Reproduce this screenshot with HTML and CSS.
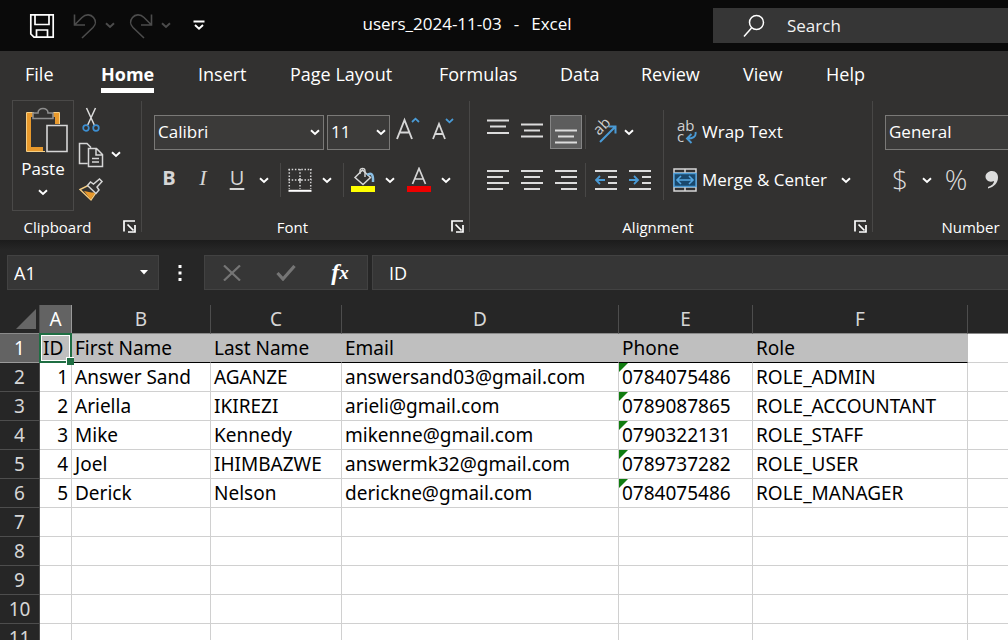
FILE: index.html
```html
<!DOCTYPE html>
<html lang="en">
<head>
<meta charset="utf-8">
<title>users_2024-11-03 - Excel</title>
<link rel="stylesheet" href="styles.css">
</head>
<body>
<svg class="defs" aria-hidden="true">
  <symbol id="chev" viewBox="0 0 10 7"><path d="M1 1.2l4 3.8 4-3.8" fill="none" stroke="currentColor" stroke-width="1.9"/></symbol>
  <symbol id="launch" viewBox="0 0 13 13"><path d="M1 11.5V1h11M4.500 4.500l6 6M12 5v7H5" fill="none" stroke="#fff" stroke-width="1.7"/></symbol>
</svg>

<header class="titlebar">
  <div class="quick">
    <button class="quick-btn" aria-label="Save"><svg width="26" height="26" viewBox="0 0 26 26" fill="none" stroke="#fff" stroke-width="1.700"><path d="M1.800 1.800h22.400v22.400H5l-3.200-3.200zM6 2v9.500h14V2M7.500 24v-7h11v7"/></svg></button>
    <button class="quick-btn dim" aria-label="Undo"><svg width="26" height="26" viewBox="0 0 26 26" fill="none" stroke="currentColor" stroke-width="1.600"><path d="M2.500 1.500v10.500h10.500M2.500 12L10 4.500c4-4 9-3 11.500 0s2.500 7-.5 10L10 25"/></svg></button>
    <button class="chev-btn dim" aria-label="Undo list"><svg width="10" height="7"><use href="#chev"/></svg></button>
    <button class="quick-btn dim" aria-label="Redo"><svg width="26" height="26" viewBox="0 0 26 26" fill="none" stroke="currentColor" stroke-width="1.600"><path d="M23.500 1.500v10.500H13M23.500 12L16 4.500c-4-4-9-3-11.500 0s-2.500 7 .5 10L16 25"/></svg></button>
    <button class="chev-btn dim" aria-label="Redo list"><svg width="10" height="7"><use href="#chev"/></svg></button>
    <button class="quick-btn" aria-label="Customize toolbar"><svg width="12" height="11" viewBox="0 0 12 11" fill="none" stroke="#fff"><path d="M.5 1.500h11" stroke-width="2"/><path d="M2 5l4 3.800L10 5" stroke-width="1.900"/></svg></button>
  </div>
  <h1 class="doc-title"><span>users_2024-11-03</span><span>-</span><span>Excel</span></h1>
  <label class="search">
    <svg width="22" height="24" viewBox="0 0 22 24" fill="none" stroke="#fff" stroke-width="1.500"><circle cx="13.500" cy="8.500" r="7"/><path d="M8.500 14L1 22.500"/></svg>
    <input type="search" placeholder="Search" aria-label="Search">
  </label>
</header>

<section class="ribbon">
  <nav class="tabs">
    <a href="#file">File</a><a href="#home" class="current">Home</a><a href="#insert">Insert</a><a href="#layout">Page Layout</a><a href="#formulas">Formulas</a><a href="#data">Data</a><a href="#review">Review</a><a href="#view">View</a><a href="#help">Help</a>
  </nav>
  <div class="groups">
    <section class="group clipboard">
      <div class="clip-main">
        <button class="paste">
          <svg width="44" height="46" viewBox="0 0 44 46" fill="none">
            <path d="M12 8H4v34h14M26 8h6v9" stroke="#e8992c" stroke-width="4"/>
            <path d="M9 5.500H1.500v39H20M28 5.500h6.500V17" stroke="#f6cf85" stroke-width="1"/>
            <path d="M8 11.500V6h5c0-6 10-6 10 0h5v5.500z" fill="#323130" stroke="#8e8e8e" stroke-width="1.600"/>
            <path d="M22 18.500h20v26H22z" fill="#323130" stroke="#d6d6d6" stroke-width="1.600"/>
          </svg>
          <span>Paste</span>
          <svg width="10" height="7"><use href="#chev"/></svg>
        </button>
        <div class="clip-tools">
          <button class="tool" aria-label="Cut"><svg width="18" height="26" viewBox="0 0 18 26" fill="none"><path d="M4.500 1l7.800 17M13.500 1L5.700 18" stroke="#dcdcdc" stroke-width="1.500"/><circle cx="4" cy="21" r="2.800" stroke="#3d8fd1" stroke-width="1.700"/><circle cx="14" cy="21" r="2.800" stroke="#3d8fd1" stroke-width="1.700"/></svg></button>
          <span class="tool-split">
            <button class="tool" aria-label="Copy"><svg width="26" height="26" viewBox="0 0 26 26" fill="none" stroke="#d6d6d6" stroke-width="1.500"><path d="M9.500 21.500H1.500V1.500h7.500l4 4M10.500 6.500h8l6 6v12h-14zM18 7v6h6M14 16.500h7M14 20h7"/></svg></button>
            <button class="chev-btn" aria-label="Copy options"><svg width="10" height="7"><use href="#chev"/></svg></button>
          </span>
          <button class="tool" aria-label="Format Painter"><svg width="26" height="24" viewBox="0 0 26 24" fill="none"><path d="M2 11.500L13 22l5.500-8-8.500-6.500z" fill="#323130" stroke="#f6cf85" stroke-width="1.400"/><path d="M6 13l7.500 1.500 4 0L12.500 21.500z" fill="#e8992c"/><path d="M9.500 7.500l3-3.500 3 2 6-5 2.500 2.500-5 5.500 2 3-3 3.500z" fill="#323130" stroke="#d6d6d6" stroke-width="1.500"/></svg></button>
        </div>
      </div>
      <footer class="group-label"><span>Clipboard</span><button class="launch" aria-label="Clipboard settings"><svg width="13" height="13"><use href="#launch"/></svg></button></footer>
    </section>

    <section class="group font">
      <div class="group-main">
        <div class="row row-fields">
          <span class="field field-name"><select aria-label="Font"><option>Calibri</option></select><svg width="10" height="7"><use href="#chev"/></svg></span>
          <span class="field field-size"><select aria-label="Font size"><option>11</option></select><svg width="10" height="7"><use href="#chev"/></svg></span>
          <button class="icon-btn raised" aria-label="Increase font size"><svg width="26" height="30" viewBox="0 0 26 30" fill="none"><path d="M2 25L9.500 6l7.500 19M4.700 18.500h9.800" stroke="#d6d6d6" stroke-width="1.900"/><path d="M17 8l3.500-3.300L24 8" stroke="#4a9bd6" stroke-width="1.800"/></svg></button>
          <button class="icon-btn raised" aria-label="Decrease font size"><svg width="26" height="30" viewBox="0 0 26 30" fill="none"><path d="M4 25l6-15 6 15M6 20h8" stroke="#d6d6d6" stroke-width="1.800"/><path d="M17 5l3.500 3.300L24 5" stroke="#4a9bd6" stroke-width="1.800"/></svg></button>
        </div>
        <div class="row row-buttons">
          <button class="icon-btn glyph bold">B</button>
          <button class="icon-btn glyph italic">I</button>
          <button class="icon-btn glyph underline">U</button>
          <button class="chev-btn" aria-label="Underline options"><svg width="10" height="7"><use href="#chev"/></svg></button>
          <i class="sep"></i>
          <button class="icon-btn" aria-label="Borders"><svg width="24" height="24" viewBox="0 0 24 24" fill="none" stroke="#d6d6d6" stroke-width="1.500"><path d="M.5 1.500h23M.5 12h23" stroke-dasharray="1.500 1.700"/><path d="M1.300 1v20M12 1v20M22.700 1v20" stroke-dasharray="1.500 1.700"/><path d="M10 12h4M12 10v4" stroke-width="1.200"/><path d="M.5 22.800h23" stroke="#fff" stroke-width="2"/></svg></button>
          <button class="chev-btn" aria-label="Border options"><svg width="10" height="7"><use href="#chev"/></svg></button>
          <i class="sep"></i>
          <button class="icon-btn" aria-label="Fill color"><svg width="24" height="26" viewBox="0 0 24 26" fill="none"><path d="M4 10.500L11.500 3l8 7.500-7.500 7z" stroke="#d6d6d6" stroke-width="1.500"/><path d="M9 7V4c0-3.500 5-3.500 5 0v6" stroke="#d6d6d6" stroke-width="1.400"/><path d="M16 8c4-3 6.500-1 6 7" stroke="#8bbfe4" stroke-width="2.500"/><path d="M0 19h24v6H0z" fill="#ffff00"/></svg></button>
          <button class="chev-btn" aria-label="Fill color options"><svg width="10" height="7"><use href="#chev"/></svg></button>
          <i class="space"></i>
          <button class="icon-btn" aria-label="Font color"><svg width="24" height="26" viewBox="0 0 24 26" fill="none"><path d="M5.500 17L12 1.500 18.500 17M8 12h8" stroke="#d6d6d6" stroke-width="1.700"/><path d="M0 19h24v6H0z" fill="#ee0000"/></svg></button>
          <button class="chev-btn" aria-label="Font color options"><svg width="10" height="7"><use href="#chev"/></svg></button>
        </div>
      </div>
      <footer class="group-label"><span>Font</span><button class="launch" aria-label="Font settings"><svg width="13" height="13"><use href="#launch"/></svg></button></footer>
    </section>

    <section class="group alignment">
      <div class="align-main">
        <div class="group-main">
          <div class="row">
            <button class="icon-btn" aria-label="Top align"><svg width="22" height="30" viewBox="0 0 22 30" stroke="#dcdcdc" stroke-width="1.800"><path d="M0 3.500h22M3 9.500h16M0 16h22"/></svg></button>
            <button class="icon-btn" aria-label="Middle align"><svg width="22" height="30" viewBox="0 0 22 30" stroke="#dcdcdc" stroke-width="1.800"><path d="M0 7.500h22M3 13.500h16M0 19.500h22"/></svg></button>
            <button class="icon-btn active" aria-label="Bottom align"><svg width="22" height="30" viewBox="0 0 22 30" stroke="#dcdcdc" stroke-width="1.800"><path d="M0 13.500h22M3 19.500h16M0 25.500h22"/></svg></button>
            <i class="sep"></i>
            <button class="icon-btn narrow" aria-label="Orientation"><svg width="28" height="34" viewBox="0 0 28 34" fill="none"><text x="0" y="0" transform="translate(9 21) rotate(-45)" class="ab">ab</text><path d="M10 27L25 12M18.500 11.500H25.500V18.500" stroke="#4a9bd6" stroke-width="2"/></svg></button>
            <button class="chev-btn" aria-label="Orientation options"><svg width="10" height="7"><use href="#chev"/></svg></button>
          </div>
          <div class="row">
            <button class="icon-btn" aria-label="Align left"><svg width="22" height="22" viewBox="0 0 22 22" stroke="#dcdcdc" stroke-width="1.800"><path d="M0 2h22M0 8h16M0 14h22M0 20h16"/></svg></button>
            <button class="icon-btn" aria-label="Center"><svg width="22" height="22" viewBox="0 0 22 22" stroke="#dcdcdc" stroke-width="1.800"><path d="M0 2h22M3 8h16M0 14h22M3 20h16"/></svg></button>
            <button class="icon-btn" aria-label="Align right"><svg width="22" height="22" viewBox="0 0 22 22" stroke="#dcdcdc" stroke-width="1.800"><path d="M0 2h22M6 8h16M0 14h22M6 20h16"/></svg></button>
            <i class="sep"></i>
            <button class="icon-btn" aria-label="Decrease indent"><svg width="22" height="22" viewBox="0 0 22 22" fill="none" stroke="#dcdcdc" stroke-width="1.800"><path d="M0 2h22M13 8h9M13 14h9M0 20h22"/><path d="M10 11H1.500M5 7l-4 4 4 4" stroke="#4a9bd6"/></svg></button>
            <button class="icon-btn" aria-label="Increase indent"><svg width="22" height="22" viewBox="0 0 22 22" fill="none" stroke="#dcdcdc" stroke-width="1.800"><path d="M0 2h22M13 8h9M13 14h9M0 20h22"/><path d="M0 11h8.500M5 7l4 4-4 4" stroke="#4a9bd6"/></svg></button>
          </div>
        </div>
        <div class="group-main wrap-block">
          <div class="row"><button class="text-btn"><svg width="24" height="34" viewBox="0 0 24 34" fill="none"><text x="4" y="16" class="ab">ab</text><text x="4" y="27" class="ab">c</text><path d="M22.500 17c1 5-3 6.500-8 6.500M18.500 19l-4.500 4.500 4.500 4.500" stroke="#4a9bd6" stroke-width="1.900"/></svg><span>Wrap Text</span></button></div>
          <div class="row"><button class="text-btn"><svg width="24" height="24" viewBox="0 0 24 24" fill="none"><path d="M1 1h22v22H1zM12 1v22M1 5h22M1 19h22" stroke="#d6d6d6" stroke-width="1.500"/><path d="M1 5.500h22v13H1z" fill="#19486c" stroke="#4a9bd6" stroke-width="1.500"/><path d="M4 12h16M8 8l-4 4 4 4M16 8l4 4-4 4" stroke="#55a7e0" stroke-width="1.600"/></svg><span>Merge &amp; Center</span></button><button class="chev-btn merge-chev" aria-label="Merge options"><svg width="10" height="7"><use href="#chev"/></svg></button></div>
        </div>
      </div>
      <footer class="group-label"><span>Alignment</span><button class="launch" aria-label="Alignment settings"><svg width="13" height="13"><use href="#launch"/></svg></button></footer>
    </section>

    <section class="group number">
      <div class="group-main">
        <div class="row row-fields"><span class="field field-format"><select aria-label="Number format"><option>General</option></select><svg width="10" height="7"><use href="#chev"/></svg></span></div>
        <div class="row row-buttons">
          <button class="icon-btn symbol">$</button>
          <button class="chev-btn" aria-label="Currency options"><svg width="10" height="7"><use href="#chev"/></svg></button>
          <i class="space"></i>
          <button class="icon-btn symbol">%</button>
          <i class="space"></i>
          <button class="icon-btn" aria-label="Comma style"><svg width="14" height="22" viewBox="0 0 14 22"><path d="M7 2c4 0 6 3 6 6.500 0 5.500-4 9.500-10 11v-1.500c4-1.500 6-3.500 6-6-5 2-8.500-1-8.500-4.500C.5 4.500 3.500 2 7 2z" fill="#dcdcdc"/></svg></button>
        </div>
      </div>
      <footer class="group-label"><span>Number</span></footer>
    </section>
  </div>
</section>

<section class="formula-bar">
  <div class="name-box"><input type="text" value="A1" aria-label="Name box"><button aria-label="Named ranges"><svg width="8" height="5" viewBox="0 0 8 5"><path d="M0 0h8L4 4.500z" fill="#fff"/></svg></button></div>
  <svg class="dots" width="4" height="16" viewBox="0 0 4 16" fill="#fff"><path d="M.5 0h3v3h-3zM.5 6.500h3v3h-3zM.5 13h3v3h-3z"/></svg>
  <div class="entry">
    <button aria-label="Cancel"><svg width="18" height="16" viewBox="0 0 18 16"><path d="M1 .5l16 15M17 .5l-16 15" stroke="#757575" stroke-width="2.200"/></svg></button>
    <button aria-label="Enter"><svg width="20" height="16" viewBox="0 0 20 16" fill="none"><path d="M1.500 8l5.500 6L18.500 1" stroke="#757575" stroke-width="3.200"/></svg></button>
    <button class="fx" aria-label="Insert function">f<small>x</small></button>
  </div>
  <input class="formula" type="text" value="ID" aria-label="Formula">
</section>

<main class="sheet">
  <table>
    <colgroup><col class="c-num"><col class="c-a"><col class="c-b"><col class="c-c"><col class="c-d"><col class="c-e"><col class="c-f"><col></colgroup>
    <thead><tr><th class="corner"><svg width="20" height="20" viewBox="0 0 20 20"><path d="M20 0v20H0z" fill="#666"/></svg></th><th class="selected">A</th><th>B</th><th>C</th><th>D</th><th>E</th><th>F</th><th></th></tr></thead>
    <tbody>
      <tr class="titles"><th class="selected">1</th><td class="cursor">ID</td><td>First Name</td><td>Last Name</td><td>Email</td><td>Phone</td><td>Role</td><td></td></tr>
      <tr><th>2</th><td class="num">1</td><td>Answer Sand</td><td>AGANZE</td><td>answersand03@gmail.com</td><td class="flag">0784075486</td><td>ROLE_ADMIN</td><td></td></tr>
      <tr><th>3</th><td class="num">2</td><td>Ariella</td><td>IKIREZI</td><td>arieli@gmail.com</td><td class="flag">0789087865</td><td>ROLE_ACCOUNTANT</td><td></td></tr>
      <tr><th>4</th><td class="num">3</td><td>Mike</td><td>Kennedy</td><td>mikenne@gmail.com</td><td class="flag">0790322131</td><td>ROLE_STAFF</td><td></td></tr>
      <tr><th>5</th><td class="num">4</td><td>Joel</td><td>IHIMBAZWE</td><td>answermk32@gmail.com</td><td class="flag">0789737282</td><td>ROLE_USER</td><td></td></tr>
      <tr><th>6</th><td class="num">5</td><td>Derick</td><td>Nelson</td><td>derickne@gmail.com</td><td class="flag">0784075486</td><td>ROLE_MANAGER</td><td></td></tr>
      <tr><th>7</th><td></td><td></td><td></td><td></td><td></td><td></td><td></td></tr>
      <tr><th>8</th><td></td><td></td><td></td><td></td><td></td><td></td><td></td></tr>
      <tr><th>9</th><td></td><td></td><td></td><td></td><td></td><td></td><td></td></tr>
      <tr><th>10</th><td></td><td></td><td></td><td></td><td></td><td></td><td></td></tr>
      <tr><th>11</th><td></td><td></td><td></td><td></td><td></td><td></td><td></td></tr>
    </tbody>
  </table>
</main>
</body>
</html>
```
FILE: styles.css
```css
* { box-sizing: border-box; }

body {
  margin: 0;
  height: 100vh;
  display: flex;
  flex-direction: column;
  overflow: hidden;
  background: #262626;
  color: #fff;
  font: 16px/24px "Open Sans", "Noto Sans", sans-serif;
}

button, input, select {
  margin: 0;
  padding: 0;
  border: 0;
  background: none;
  color: inherit;
  font: inherit;
}

button {
  display: flex;
  flex: none;
  align-items: center;
  justify-content: center;
}

input { min-width: 0; outline: 0; }
svg { display: block; flex: none; }
.defs { position: absolute; width: 0; height: 0; }

/* Title bar */
.titlebar {
  flex: none;
  height: 51px;
  display: grid;
  grid-template-columns: 221px 492px 1fr;
  align-items: center;
  background: #0a0a0a;
}
.quick { display: flex; align-items: center; padding-left: 24px; }
.quick-btn { width: 36px; height: 36px; }
.dim { color: #4c4c4c; }
.quick .chev-btn { width: 14px; margin: 0 3px 0 4px; }
.quick-btn.dim { width: 36px; margin-left: 7px; margin-right: -4px; }
.quick .chev-btn + .quick-btn.dim { margin-left: 3px; }
.quick .chev-btn + .quick-btn:last-child { margin-left: 5px; }
.doc-title {
  display: flex;
  justify-content: center;
  gap: 12px;
  margin: 0;
  padding-bottom: 4px;
  font-size: 17px;
  font-weight: 400;
}
.search {
  height: 35px;
  display: flex;
  align-items: center;
  gap: 22px;
  padding-left: 30px;
  background: #363636;
}
.search input { flex: 1; appearance: none; font-size: 17px; }
.search input::placeholder { color: #f2f2f2; }

/* Ribbon */
.ribbon { flex: none; background: #323130; overflow: hidden; }
.tabs {
  display: grid;
  grid-template-columns: 76px 97px 92px 149px 121px 81px 102px 83px 1fr;
  height: 46px;
  padding-left: 25px;
  font-size: 18px;
}
.tabs a {
  justify-self: start;
  height: 42px;
  padding-top: 11px;
  color: inherit;
  text-decoration: none;
  white-space: nowrap;
}
.tabs .current { font-weight: 700; border-bottom: 5px solid #fff; }
.groups { display: flex; }
.group {
  flex: none;
  height: 143px;
  display: flex;
  flex-direction: column;
  background: linear-gradient(#484746, #484746) right 4px / 1px 131px no-repeat;
}
.clipboard { width: 142px; background-position: right top 4px; }
.font { width: 328px; background-position: right top 4px; }
.alignment { width: 403px; background-position: right top 4px; }
.number { width: 195px; background: none; }

.group-main {
  flex: 1;
  display: flex;
  flex-direction: column;
  gap: 12px;
  padding-top: 17px;
  padding-left: 10px;
}
.row { display: flex; align-items: center; height: 36px; }
.row-fields { padding-left: 2px; }
.group-label {
  position: relative;
  height: 24px;
  padding-right: 27px;
  text-align: center;
  font-size: 15px;
  line-height: 22px;
}
.number .group-label { padding-right: 0; }
.launch { position: absolute; right: 6px; top: 4px; }

.chev-btn { width: 20px; height: 34px; }
.icon-btn { width: 34px; height: 34px; }
.icon-btn.narrow { width: 30px; }
.icon-btn.active { width: 32px; margin: 0 1px; background: #5d5d5d; border: 1px solid #858585; }
.icon-btn.raised { padding-bottom: 6px; }
.sep { flex: none; width: 1px; height: 34px; margin: 0 2px 0 6px; background: #484746; }
.alignment .sep { margin: 0 3px 0 2px; }
.space { flex: none; width: 2px; }
.glyph { padding-bottom: 4px; font-size: 20px; color: #d6d6d6; }
.bold { font-weight: 700; }
.italic { font-family: "Liberation Serif", serif; font-size: 22px; font-style: italic; }
.underline { text-decoration: underline; text-underline-offset: 3px; }
.symbol { padding-bottom: 2px; font-size: 28px; font-weight: 300; color: #dcdcdc; }
.ab { font: 15px/15px "Open Sans", sans-serif; fill: #d0d0d0; }

.field { display: grid; align-items: center; height: 35px; margin-right: 3px; }
.field select, .field svg { grid-area: 1 / 1; }
.field select {
  width: 100%;
  height: 100%;
  padding-left: 3px;
  appearance: none;
  border: 1px solid #7a7977;
  background: #3b3a39;
  border-radius: 0;
  font-size: 17px;
}
.field svg { justify-self: end; margin-right: 4px; pointer-events: none; }
.field-name { width: 170px; }
.field-size { width: 63px; margin-right: 1px; }
.field-format { width: 180px; }

/* Clipboard group */
.clip-main { flex: 1; display: flex; gap: 3px; padding: 3px 0 0 12px; }
.paste {
  flex-direction: column;
  justify-content: flex-start;
  width: 62px;
  height: 111px;
  gap: 4px;
  padding: 6px 0 0;
  border: 1px solid #4a4948;
  font-size: 17px;
}
.paste svg:first-child { margin-left: 8px; }
.paste svg:last-child { margin-top: 4px; }
.clip-tools { padding-top: 2px; }
.tool { width: 28px; height: 35px; }
.tool-split { display: flex; }
.tool-split .chev-btn { margin-left: 1px; }

/* Alignment group */
.align-main { flex: 1; display: flex; }
.align-main > .group-main { flex: none; width: 193px; padding-left: 11px; }
.align-main > .wrap-block {
  width: auto;
  padding-left: 10px;
  background: linear-gradient(#484746, #484746) 0 13px / 1px 90px no-repeat;
}
.text-btn { gap: 5px; font-size: 17px; white-space: nowrap; }
.merge-chev { margin-left: 9px; }

/* Formula bar */
.formula-bar {
  flex: none;
  display: flex;
  align-items: center;
  height: 65px;
  padding-left: 7px;
  background: linear-gradient(#1c1c1c, #262626 10px);
  font-size: 18px;
}
.name-box, .entry, .formula { height: 35px; background: #363636; border: 1px solid #424242; }
.name-box { display: flex; width: 152px; }
.name-box input { flex: 1; padding-left: 6px; }
.name-box button { width: 28px; }
.dots { margin: 0 22px 0 19px; }
.entry { display: flex; width: 164px; margin-right: 4px; }
.entry button { flex: 1; }
.entry .fx { font: italic 700 24px "Liberation Serif", serif; }
.fx small { font-size: 19px; }
.formula { flex: 1; padding-left: 16px; border-right: 0; }

/* Sheet */
.sheet { flex: 1; min-height: 0; overflow: hidden; background: #fff; }
table {
  width: 100%;
  table-layout: fixed;
  border-collapse: separate;
  border-spacing: 0;
  color: #000;
  font: 19px/28px "Noto Sans", "Open Sans", sans-serif;
}
.c-num { width: 40px; }
.c-a { width: 32px; }
.c-b { width: 139px; }
.c-c { width: 131px; }
.c-d { width: 277px; }
.c-e { width: 134px; }
.c-f { width: 215px; }
th, td { height: 29px; padding: 0 3px; white-space: nowrap; }
th {
  background: #262626;
  color: #d6d6d6;
  font-weight: 400;
  text-align: center;
  border-right: 1px solid #4d4d4d;
  border-bottom: 1px solid #4d4d4d;
}
thead th { border-bottom-color: #8a8a8a; }
thead th:last-child { border-right: 0; }
.corner { padding: 0 3px; }
.corner svg { margin-left: auto; }
th.selected { background: #636363; color: #fff; border-color: #9a9a9a; }
td {
  border-right: 1px solid #d0d0d0;
  border-bottom: 1px solid #d0d0d0;
}
td:last-child { border-right: 0; }
.titles td:not(:last-child) { background: #bfbfbf; border-right-color: #bfbfbf; border-bottom-color: #000; }
.num { text-align: right; }
.cursor, .flag { position: relative; }
.cursor::before {
  content: "";
  position: absolute;
  inset: -1px -1px -1px -1px;
  border: 2px solid #1f6e43;
  box-shadow: inset 0 0 0 1px #fff;
}
.cursor::after {
  content: "";
  position: absolute;
  right: -3px;
  bottom: -3px;
  width: 7px;
  height: 7px;
  background: #1f6e43;
  border: solid #fff;
  border-width: 1px 0 0 1px;
}
.flag::before {
  content: "";
  position: absolute;
  left: 0;
  top: 0;
  border: solid transparent;
  border-width: 0 9px 9px 0;
  border-left: 0;
  border-top: 9px solid #107c10;
  border-bottom: 0;
}
```
